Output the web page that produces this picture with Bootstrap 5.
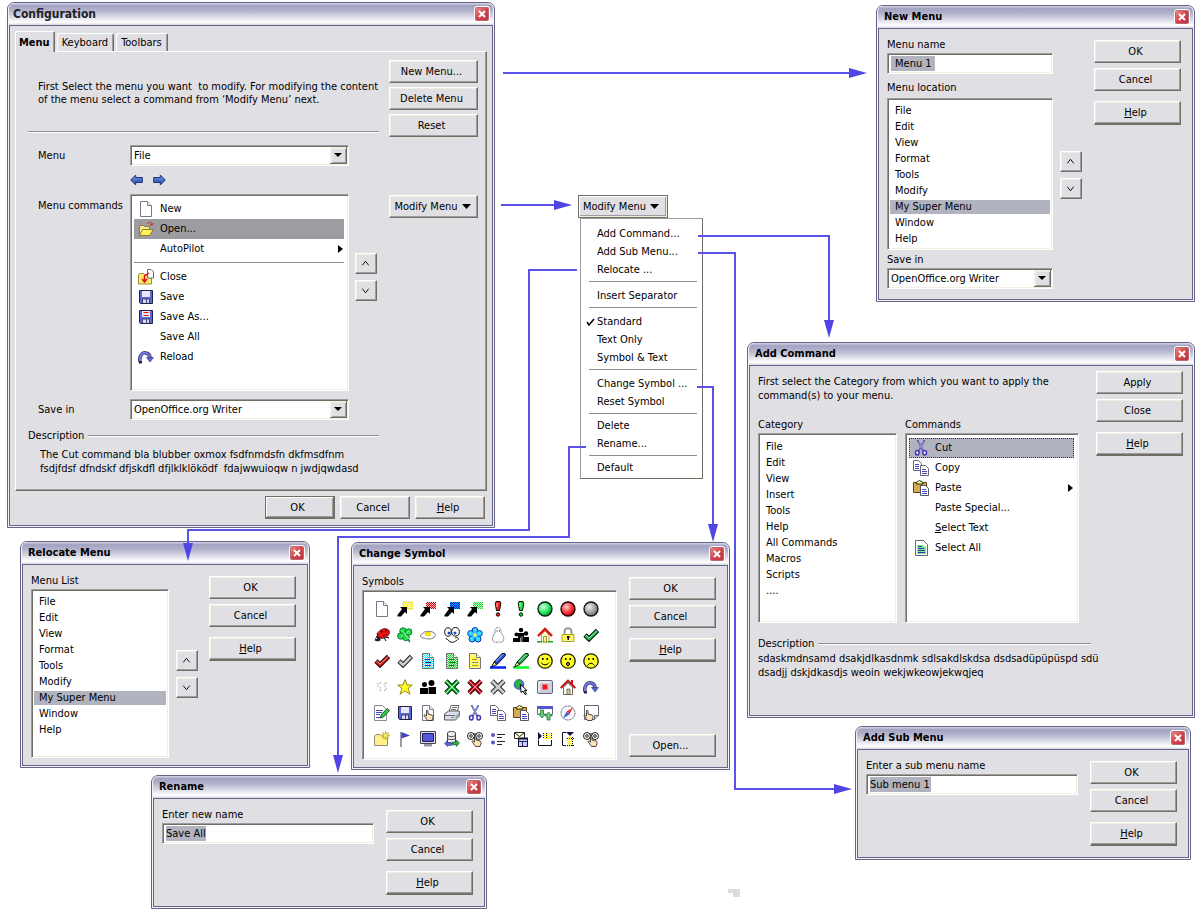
<!DOCTYPE html>
<html lang="en">
<head>
<meta charset="utf-8">
<meta name="viewport" content="width=device-width, initial-scale=1">
<title>Menu configuration dialogs</title>
<link href="https://cdn.jsdelivr.net/npm/bootstrap@5.3.0/dist/css/bootstrap.min.css" rel="stylesheet">
<style>
:root{--face:#e0dfe4;--edge:#65658a;--dark:#716f64;--mid:#9d9da1;--cream:#f1efe2;--sel:#b1b3bf}
body{font:11px/14px "DejaVu Sans Condensed","DejaVu Sans",sans-serif;color:#000;background:#fff}
svg{display:block;flex:none}
.desk{min-height:920px}
.wires{left:0;top:0;pointer-events:none;z-index:3}
/* windows */
.win{position:absolute;border:1px solid var(--edge);border-radius:7px 7px 0 0;background:#f4f4f8;padding:0 1px 1px;display:flex;flex-direction:column}
.win-title{height:22px;padding:0 3px 0 6px;border-radius:6px 6px 0 0;background:linear-gradient(#d8d8e6 0,#a2a2c2 12%,#b4b4ce 35%,#fff 88%,#d4d4e0 100%)}
.win-title h2{font-size:11px;line-height:22px;font-weight:700;margin:0}
.win-title .big{font-size:12px;color:#222}
.win-x{width:16px;height:16px;padding:0;border:1px solid #fff;border-radius:3px;background:linear-gradient(135deg,#ef9a92,#d2434a 50%,#b8323c);box-shadow:0 0 0 1px #b9656f inset}
.win-body{flex:1;border:1px solid var(--edge);background:var(--face);padding:8px 11px 6px 8px}
.w-config{left:7px;top:2px;width:488px;min-height:524px}
.w-new{left:876px;top:5px;width:319px;min-height:297px}
.w-add{left:747px;top:342px;width:448px;min-height:376px}
.w-reloc{left:20px;top:541px;width:290px;min-height:227px}
.w-symbol{left:351px;top:542px;width:379px;min-height:228px}
.w-sub{left:855px;top:726px;width:336px;min-height:134px}
.w-rename{left:151px;top:775px;width:336px;min-height:134px}
/* controls */
.wbtn{font-size:11px;line-height:13px;color:#000;height:23px;padding:0 6px 0 2px;border:1px solid;border-color:#fff var(--dark) var(--dark) #fff;border-radius:0;background:var(--face);box-shadow:inset -1px -1px var(--mid),inset 1px 1px var(--cream)}
.wbtn:hover{background:#e8e7ec;border-color:#fff var(--dark) var(--dark) #fff}
.wbtn.deep{height:24px;border-bottom-width:2px;margin-top:5px}
.wbtn.default{border:2px solid var(--dark);border-width:1px 2px 2px 1px;box-shadow:inset 1px 1px #fff,inset -1px -1px var(--mid)}
.side{width:87px;gap:5px}
.side.drop{margin-top:3px}
.spin{width:22px;gap:6px;margin-left:7px}
.spin .wbtn{height:21px;padding:0 0 0 4px}
.sunk{border:1px solid;border-color:var(--mid) #fff #fff var(--mid);border-radius:0;background-color:#fff;box-shadow:inset 1px 1px var(--dark),inset -1px -1px var(--cream)}
.lbl{display:block;line-height:16px;margin:0}
.txt{display:block;width:100%;height:21px;padding:0 3px;font-size:11px;color:#000;background:linear-gradient(var(--sel),var(--sel)) 3px 2px/var(--hl,40px) 15px no-repeat #fff;outline:0}
.txt.inset{padding-left:7px}
.combo{appearance:none;display:block;width:100%;height:21px;padding:0 20px 0 3px;font-size:11px;color:#000;outline:0;background:#fff url("data:image/svg+xml,%3Csvg xmlns='http://www.w3.org/2000/svg' width='17' height='17'%3E%3Cpath fill='%23716f64' d='M0 0h17v17H0z'/%3E%3Cpath fill='%23f1efe2' d='M0 0h16v16H0z'/%3E%3Cpath fill='%239d9da1' d='M2 2h14v14H2z'/%3E%3Cpath fill='%23e0dfe4' d='M2 2h13v13H2z'/%3E%3Cpath d='M4 6h8L8 10z'/%3E%3C/svg%3E") right 1px top 1px no-repeat}
.pick{appearance:none;display:block;width:100%;padding:4px 2px;font-size:11px;color:#000;overflow:hidden;outline:0}
.pick option{height:16px;min-height:16px;line-height:14px;padding:0 5px;border:solid transparent;border-width:1px 0;background-clip:padding-box}
.pick option:checked{background-image:linear-gradient(var(--sel),var(--sel));color:#000}
.cmds{list-style:none;margin:0;padding:4px 4px 4px 3px}
.cmds li{display:flex;align-items:center;gap:6px;height:20px;padding:0 4px}
.cmds li svg:last-child:not(:first-child){margin-left:auto;margin-right:-3px}
.cmds .on{background:var(--sel);outline:1px dotted #333;outline-offset:-1px}
.cmds .on.plain{background:#9d9ca1;outline:0}
.cmds .bar{height:8px;padding:0}
.cmds .bar hr{flex:1;margin:0 0 2px;border:0;border-top:1px solid #8c8c90;opacity:1}
.gap16{width:16px}
.rule{flex:1;height:2px;margin:0;border:0;border-top:1px solid #8f8f96;border-bottom:1px solid #fff;opacity:1}
/* configuration dialog */
.w-config .win-title{padding-left:4px}
.w-config .win-body{padding:5px 5px 6px 5px}
.tabs{height:20px;padding-left:0;gap:2px}
.tabs button{font-size:11px;line-height:13px;height:18px;border:1px solid;border-color:#fff var(--dark) transparent #fff;border-bottom:0;border-radius:3px 2px 0 0;background:var(--face);color:#000;padding:0 5px 0 4px;box-shadow:inset -1px 0 var(--mid)}
.tabs button.active{height:21px;margin-bottom:-1px;font-weight:700;padding:0 4px 0 3px;position:relative;z-index:1}
.pane{border:1px solid;border-color:#fff var(--dark) var(--dark) #fff;box-shadow:inset -1px -1px var(--mid);padding:0 8px 14px 12px}
.main{width:351px}
.main .intro{line-height:13px;margin:28px 0 25px 10px;white-space:pre-line}
.grid-row{display:grid;grid-template-columns:92px 219px auto;padding-left:10px}
.main .spin{margin-left:6px;padding-bottom:32px}
.foot{gap:5px;margin:5px 2px 0 0}
.foot .wbtn{width:70px}
.tall{height:197px}
.tools{height:28px;gap:10px}
.panebtns{width:89px;gap:4px;padding-top:8px}
.lower{margin-top:54px}
.w-new .spin{padding-top:20px}
.w-reloc .spin{padding-top:16px}
/* add command */
.w-add .win-body{padding:9px 9px 8px 8px}
.w-add .wide{width:333px}
.w-add .side{margin-top:-4px}
/* popup menu */
.popmenu{position:absolute;left:578px;top:195px;z-index:2}
.popmenu .wbtn{width:90px;border-color:var(--dark);box-shadow:inset 1px 1px #fff,inset -1px -1px var(--cream),inset -2px -2px var(--mid)}
.popmenu .dropdown-menu{position:static;margin:0 0 0 2px;min-width:0;width:123px;padding:6px 0 1px;border:1px solid;border-color:var(--mid) var(--dark) var(--dark) var(--mid);border-radius:0;background:#fff}
.popmenu .dropdown-item{display:flex;align-items:center;font-size:11px;line-height:18px;padding:0 0 0 5px;color:#000;gap:2px}
.popmenu .dropdown-item i{width:9px}
.popmenu .dropdown-divider{margin:2px 5px 5px 8px;border-top:1px solid #8c8c90;opacity:1}
.popmenu .dropdown-divider.near{margin:2px 5px 3px 8px}
.symbols{display:grid;grid-template-columns:repeat(10,1fr);grid-auto-rows:26px;place-items:center;height:170px;padding:5px 13px 0 7px}
.crumb{left:728px;top:889px}
</style>
</head>
<body>
<svg width="0" height="0" class="position-absolute" aria-hidden="true">
<defs>
<pattern id="pY" width="2" height="2" patternUnits="userSpaceOnUse"><path fill="#ffb" d="M0 0h2v2H0z"/><path fill="#fe2" d="M0 0h1v1H0zM1 1h1v1H1z"/></pattern>
<pattern id="pR" width="2" height="2" patternUnits="userSpaceOnUse"><path fill="#fbb" d="M0 0h2v2H0z"/><path fill="#c01" d="M0 0h1v1H0zM1 1h1v1H1z"/></pattern>
<pattern id="pB" width="2" height="2" patternUnits="userSpaceOnUse"><path fill="#09f" d="M0 0h2v2H0z"/><path fill="#02c" d="M0 0h1v1H0zM1 1h1v1H1z"/></pattern>
<pattern id="pG" width="2" height="2" patternUnits="userSpaceOnUse"><path fill="#cfc" d="M0 0h2v2H0z"/><path fill="#2c3" d="M0 0h1v1H0zM1 1h1v1H1z"/></pattern>
<pattern id="pC" width="2" height="2" patternUnits="userSpaceOnUse"><path fill="#fff" d="M0 0h2v2H0z"/><path fill="#0ef" d="M0 0h1v1H0zM1 1h1v1H1z"/></pattern>
<radialGradient id="bG" cx=".38" cy=".35" r=".62"><stop offset="0" stop-color="#dfe"/><stop offset=".6" stop-color="#3e6"/><stop offset="1" stop-color="#0a3"/></radialGradient>
<radialGradient id="bR" cx=".38" cy=".35" r=".62"><stop offset="0" stop-color="#fcc"/><stop offset=".6" stop-color="#f44"/><stop offset="1" stop-color="#c01"/></radialGradient>
<radialGradient id="bK" cx=".38" cy=".35" r=".62"><stop offset="0" stop-color="#eee"/><stop offset=".6" stop-color="#aaa"/><stop offset="1" stop-color="#777"/></radialGradient>
<linearGradient id="gA" x2="0" y2="1"><stop stop-color="#7da0ee"/><stop offset="1" stop-color="#1c3c9c"/></linearGradient>
</defs>
<symbol id="up" viewBox="0 0 16 16"><path d="M4.500 10 8 5.500 11.500 10" fill="none" stroke="#000"/></symbol>
<symbol id="new" viewBox="0 0 16 16"><path fill="#fff" stroke="#778" d="M2.500.5h7l4 4v11h-11z"/><path fill="#eef" stroke="#778" d="M9.500.5v4h4"/></symbol>
<symbol id="open" viewBox="0 0 16 16"><path fill="#ffe98a" stroke="#8a7c30" d="M1.500 14V4.500h4l1 1h5v3"/><path fill="#fff35c" stroke="#8a7c30" d="m1.500 14.500 3-6h11l-4 6z"/><path d="M9 3c2-3 5-2 5 1m-2-1 2 1.500L15.500 2" fill="none" stroke="#d22"/></symbol>
<symbol id="close" viewBox="0 0 16 16"><path fill="#ffee6a" stroke="#9a8a40" d="M.5 15V5.500l1-1h4l1 1h7V15z"/><path fill="#fff" stroke="#667" d="M9.500.5h3.500l2.500 2.500v6h-6z"/><path d="M11 4 6.500 7v5M4 10l2.500 3L9 10" fill="none" stroke="#d11" stroke-width="1.500"/></symbol>
<symbol id="save" viewBox="0 0 16 16"><path fill="#5c67dc" stroke="#224" d="M1.500 1.500h13v13h-12l-1-1z"/><path fill="#e8e8f8" d="M4 2h8v6H4z"/><path fill="#447" d="M4 9.500h8V14H4z"/><path fill="#d8dcf0" d="M5 10.500h3V14H5zM9 10.500h2V14H9z"/></symbol>
<symbol id="saveas" viewBox="0 0 16 16"><use href="#save"/><path stroke="#e11" d="M5.500 3.500h5M5.500 6.500h5"/></symbol>
<symbol id="reload" viewBox="0 0 16 16"><path d="M2 13C1 7 4 3 8 4c2.500.5 4 2 4 5" fill="none" stroke="#336" stroke-width="3.500"/><path d="M2 13C1 7 4 3 8 4c2.500.5 4 2 4 5" fill="none" stroke="#7078e4" stroke-width="2"/><path fill="#5a5fe0" stroke="#336" stroke-width=".6" d="M8.500 8.500h7L12 13z"/><path d="M1 12h3v2.500H1z" fill="#225"/></symbol>
<symbol id="cut" viewBox="0 0 16 16"><path d="m4.500 0 5.800 11M11.500 0 5.700 11" fill="none" stroke="#55a" stroke-width="1.700"/><path d="m5.500 1.500 4 8m1-8-4 8" stroke="#a9b4f0" stroke-width=".6"/><g fill="#fff" stroke="#43b" stroke-width="1.500"><ellipse cx="4.300" cy="12.800" rx="1.800" ry="2.200"/><ellipse cx="11.700" cy="12.800" rx="1.800" ry="2.200"/></g></symbol>
<symbol id="copy" viewBox="0 0 16 16"><g fill="#fff" stroke="#667"><path d="M.5.500h5l3 3v7h-8z"/><path d="M7.500 5.500h5l3 3v7h-8z"/></g><path stroke="#44b" d="M2 4.500h4M2 6.500h4M2 8.500h4M9 9.500h4M9 11.500h5M9 13.500h5"/></symbol>
<symbol id="paste" viewBox="0 0 16 16"><path fill="#d8ab50" stroke="#5a4310" d="M.5 2.500h13v10H.5z"/><path fill="#ff8" stroke="#221" d="M3.500 4c0-3 1-2 3-3.500 2 1.500 3.500.5 3.500 3.500z"/><path fill="#fff" stroke="#556" d="M7.500 5.500h5l3 3v7h-8z"/><path stroke="#44b" d="M9 9.500h4M9 11.500h5M9 13.500h5"/></symbol>
<symbol id="selall" viewBox="0 0 16 16"><path fill="#fff" stroke="#667" d="M2.500.5h8l4 4v11h-12z"/><path fill="#7e8" d="M4 5h6l3 2v7H4z"/><path stroke="#33b" d="M5 6.500h4M5 8.500h6M5 10.500h7M5 12.500h7"/></symbol>
<symbol id="arr" viewBox="0 0 16 16"><path fill="#000" d="M3 6h7v7L8 11l-4 4.500H.5V14L5 8z"/></symbol>
<symbol id="shY" viewBox="0 0 16 16"><path fill="url(#pY)" stroke="#bb3" stroke-width=".5" d="M6 1h10v7H6z"/><use href="#arr"/></symbol>
<symbol id="shR" viewBox="0 0 16 16"><path fill="url(#pR)" d="M6 1h10v7H6z"/><use href="#arr"/></symbol>
<symbol id="shB" viewBox="0 0 16 16"><path fill="url(#pB)" d="M6 1h10v7H6z"/><use href="#arr"/></symbol>
<symbol id="shG" viewBox="0 0 16 16"><path fill="url(#pG)" d="M6 1h10v7H6z"/><use href="#arr"/></symbol>
<symbol id="exR" viewBox="0 0 16 16"><path fill="#e22" stroke="#100" d="M6 .5h4l.8 2L9.500 9.500h-3L5.300 2.500z"/><circle cx="8" cy="13.500" r="1.700" fill="#e22" stroke="#100"/><path d="M7 2v4" stroke="#fcc"/></symbol>
<symbol id="exG" viewBox="0 0 16 16"><path fill="#2d4" stroke="#010" d="M6 .5h4l.8 2L9.500 9.500h-3L5.300 2.500z"/><circle cx="8" cy="13.500" r="1.700" fill="#2d4" stroke="#010"/><path d="M7 2v4" stroke="#cfc"/></symbol>
<symbol id="baG" viewBox="0 0 16 16"><circle cx="8" cy="8" r="7" fill="url(#bG)" stroke="#021" stroke-width="1.300"/></symbol>
<symbol id="baR" viewBox="0 0 16 16"><circle cx="8" cy="8" r="7" fill="url(#bR)" stroke="#200" stroke-width="1.300"/></symbol>
<symbol id="baK" viewBox="0 0 16 16"><circle cx="8" cy="8" r="7" fill="url(#bK)" stroke="#111" stroke-width="1.300"/></symbol>
<symbol id="bug" viewBox="0 0 16 16"><path d="m3 6 3 8m1-9 5 9m0-4 3 1" stroke="#000"/><ellipse cx="9.500" cy="6.500" rx="6.300" ry="4.500" transform="rotate(-25 9.500 6.500)" fill="#e11" stroke="#200" stroke-width=".6"/><path d="M3 8 7 12l-3 2.500-3.500-1z" fill="#222"/><path d="M7 4h1.500v1.500H7zM11 3h1.500v1.500H11zM9 8h1.500v1.500H9zM12 7h1v1h-1z" fill="#200"/><path d="M2 11h1v1H2z" fill="#fff"/></symbol>
<symbol id="clover" viewBox="0 0 16 16"><path d="M9 8c2 3 2 5 4 7" stroke="#163" stroke-width="1.500" fill="none"/><g fill="#2d4" stroke="#063" stroke-width=".8"><circle cx="6" cy="4" r="3.300"/><circle cx="11.700" cy="5" r="3.300"/><circle cx="3.800" cy="9" r="3.300"/><circle cx="9" cy="10.500" r="3.300"/></g><path d="m4 3 8 9M12 4l-8 6" stroke="#9f9"/></symbol>
<symbol id="egg" viewBox="0 0 16 16"><path fill="#fff" stroke="#777" d="M.5 9c0-2 2-2 4-4 3-1 8-1 9.500 1 2 1 2 4-1 5-4 2-7 .5-9 0-2-.2-3.500-.5-3.500-2z"/><ellipse cx="8" cy="7" rx="3" ry="2" fill="#ffe800" stroke="#cb3" stroke-width=".6"/></symbol>
<symbol id="eyes" viewBox="0 0 16 16"><g fill="#fff" stroke="#111"><ellipse cx="4" cy="5" rx="3.300" ry="4.200"/><ellipse cx="11.500" cy="4.800" rx="3.800" ry="4.300"/></g><circle cx="5" cy="6" r="1.500" fill="#14c"/><circle cx="11" cy="6" r="1.500" fill="#14c"/><path d="M2 11c0 2 2 1 2 2 2 3 6 3 9 0m-2-2c2-1 4 0 3 2" fill="none" stroke="#111"/></symbol>
<symbol id="flower" viewBox="0 0 16 16"><g fill="#3df" stroke="#03b"><circle cx="8" cy="3.500" r="3"/><circle cx="12.300" cy="6.500" r="3"/><circle cx="11" cy="12" r="3"/><circle cx="5" cy="12" r="3"/><circle cx="3.700" cy="6.500" r="3"/></g><circle cx="8" cy="8" r="3.500" fill="#3bf"/><circle cx="8" cy="8" r="1.700" fill="#ff6"/></symbol>
<symbol id="ghost" viewBox="0 0 16 16"><path d="M5 6c-1-8 7-7 6 0 3 2 4 8 1 9-2 1-3-1-4 0s-3 0-4 0c-3-2-1-7 1-9z" fill="#fff" stroke="#888" stroke-dasharray="2 .6"/><path d="M7 3v2M9.500 3v2" stroke="#888"/></symbol>
<symbol id="people3" viewBox="0 0 16 16"><circle cx="8" cy="3" r="2.200"/><circle cx="3.500" cy="7.500" r="2"/><circle cx="13" cy="6.500" r="2.200"/><path d="M5 6h6v9H5zM0 11h7v4H0zM9 10h7v5H9z"/><path stroke="#fff" stroke-width=".6" d="M7.500 10.500v5M9 9v6"/></symbol>
<symbol id="home1" viewBox="0 0 16 16"><path fill="#ffd" stroke="#aa4" d="M4.500 8 8 4l4 4v7h-7.500z"/><path fill="url(#pY)" stroke="#762" stroke-width=".7" d="M6.500 9.500h3V15h-3z"/><path fill="none" stroke="#d11" stroke-width="2.400" d="M1 9 8 2l7 7"/><path stroke="#1a2" stroke-width="1.500" d="M0 14.800h5M11 14.800h5"/></symbol>
<symbol id="lock" viewBox="0 0 16 16"><path fill="none" stroke="#999" stroke-width="2" d="M4.500 8V5c0-5 7-5 7 0v3"/><path fill="url(#pY)" stroke="#aa2" d="M2 7.500h12v7H2z"/><path d="M7 9h2.500v2H9v2H7.500v-2H7z"/></symbol>
<symbol id="ckG" viewBox="0 0 16 16"><path d="m2 8 4 4 8.500-8.500" fill="none" stroke="#010" stroke-width="4.600"/><path d="m2.500 8.500 3.500 3.500 8-8" fill="none" stroke="#2b5" stroke-width="2.600"/><path d="m3 8 3 3 8-7.500" fill="none" stroke="#cfd" stroke-width=".7"/></symbol>
<symbol id="ckR" viewBox="0 0 16 16"><path d="m2 8 4 4 8.500-8.500" fill="none" stroke="#200" stroke-width="4.600"/><path d="m2.500 8.500 3.500 3.500 8-8" fill="none" stroke="#d22" stroke-width="2.600"/><path d="m3 8 3 3 8-7.500" fill="none" stroke="#fcc" stroke-width=".7"/></symbol>
<symbol id="ckK" viewBox="0 0 16 16"><path d="m2 8 4 4 8.500-8.500" fill="none" stroke="#222" stroke-width="4.600"/><path d="m2.500 8.500 3.500 3.500 8-8" fill="none" stroke="#ccc" stroke-width="2.600"/></symbol>
<symbol id="dC" viewBox="0 0 16 16"><path fill="url(#pC)" stroke="#777" d="M2.500.5h7l4 4v11h-11z"/><path stroke="#22b" d="M5 6.500h5M5 9.500h6M5 12.500h6"/><path fill="#fff" stroke="#777" d="M9.500.5v4h4"/></symbol>
<symbol id="dG" viewBox="0 0 16 16"><path fill="url(#pG)" stroke="#777" d="M2.500.5h7l4 4v11h-11z"/><path stroke="#173" d="M5 6.500h5M5 9.500h6M5 12.500h6"/><path fill="#fff" stroke="#777" d="M9.500.5v4h4"/></symbol>
<symbol id="dY" viewBox="0 0 16 16"><path fill="url(#pY)" stroke="#777" d="M2.500.5h7l4 4v11h-11z"/><path stroke="#993" d="M5 6.500h5M5 9.500h6M5 12.500h6"/><path fill="#fff" stroke="#777" d="M9.500.5v4h4"/></symbol>
<symbol id="mkB" viewBox="0 0 16 16"><path stroke="#02f" stroke-width="2.500" d="M0 14.500h16"/><path fill="#24d" stroke="#012" d="m4 9 8-8.500h3l.5 2L7 11.500z"/><path fill="#fe7" stroke="#012" d="m4 9 3 2.500L1.500 14z"/><path stroke="#adf" d="m6 8.500 7-7"/></symbol>
<symbol id="mkG" viewBox="0 0 16 16"><path stroke="#0f2" stroke-width="2.500" d="M0 14.500h16"/><path fill="#2a4" stroke="#021" d="m4 9 8-8.500h3l.5 2L7 11.500z"/><path fill="#fe7" stroke="#021" d="m4 9 3 2.500L1.500 14z"/><path stroke="#bfb" d="m6 8.500 7-7"/></symbol>
<symbol id="face" viewBox="0 0 16 16"><circle cx="8" cy="8" r="7.200" fill="#ff2" stroke="#220" stroke-width="1.300"/><path d="M5 5h1.500v2H5zM9.500 5H11v2H9.500z"/><path d="m3.500 4 1-1" stroke="#fff"/></symbol>
<symbol id="f1" viewBox="0 0 16 16"><use href="#face"/><path d="M4 9.500c2 3 6 3 8 0" fill="none" stroke="#000"/></symbol>
<symbol id="f2" viewBox="0 0 16 16"><use href="#face"/><circle cx="8" cy="11" r="1.600" fill="#a80" stroke="#000"/></symbol>
<symbol id="f3" viewBox="0 0 16 16"><use href="#face"/><path d="M4.500 12.500c2-3 5-3 7 0" fill="none" stroke="#000"/></symbol>
<symbol id="dash" viewBox="0 0 16 16"><path d="M7 4H4L3.500 7l3 1.500L7 11l-3 1M13 4h-2.500l-.5 2.500 2.500 2-.5 3h-2" fill="none" stroke="#999" stroke-dasharray="1.500 1.500"/></symbol>
<symbol id="star" viewBox="0 0 16 16"><path d="m8 .7 2 5.300h5.300L11 9.500l2 5.800-5-3.500-5 3.500 2-5.800L.7 6H6z" fill="#ff2" stroke="#981"/></symbol>
<symbol id="people2" viewBox="0 0 16 16"><circle cx="4.500" cy="5.500" r="2.500"/><circle cx="11.500" cy="4" r="3"/><path d="M0 9h8v6H0zM8.600 8H16v7H8.600z"/></symbol>
<symbol id="xG" viewBox="0 0 16 16"><path d="m2 2 12 12M14 2 2 14" stroke="#010" stroke-width="4.600"/><path d="m2 2 12 12M14 2 2 14" stroke="#2c4" stroke-width="2.800"/><path d="m2 2 12 12M14 2 2 14" stroke="#dfd" stroke-width=".7"/></symbol>
<symbol id="xR" viewBox="0 0 16 16"><path d="m2 2 12 12M14 2 2 14" stroke="#200" stroke-width="4.600"/><path d="m2 2 12 12M14 2 2 14" stroke="#d12" stroke-width="2.800"/><path d="m2 2 12 12M14 2 2 14" stroke="#fcc" stroke-width=".7"/></symbol>
<symbol id="xK" viewBox="0 0 16 16"><path d="m2 2 12 12M14 2 2 14" stroke="#222" stroke-width="4.600"/><path d="m2 2 12 12M14 2 2 14" stroke="#ccc" stroke-width="2.800"/></symbol>
<symbol id="globe" viewBox="0 0 16 16"><circle cx="6" cy="5.500" r="5" fill="#47c" stroke="#247" stroke-width=".6"/><path d="M2 3c3-3 4-1 6-1l1 2-3 2-1 4C2 8 4 6 2 5z" fill="#2b3"/><path fill="#fff" stroke="#000" d="m7.500 5.500 6.500 6h-2.500l2 3.500-1.500.5-2-3.500-2 1.500z"/></symbol>
<symbol id="rec" viewBox="0 0 16 16"><rect x=".5" y="1.500" width="15" height="13" rx="1.500" fill="#ccd" stroke="#667"/><path fill="none" stroke="#fff" d="M2 13V3h12"/><path fill="#f11" d="M5.500 5.500h5v5h-5z"/></symbol>
<symbol id="home2" viewBox="0 0 16 16"><path fill="#fff" stroke="#666" d="M3.500 8 8 4l4.500 4v7.500h-9z"/><path fill="#c11" d="M11 1h2v4h-2z"/><path fill="#dc8" stroke="#543" stroke-width=".7" d="M7 10h3v5.500H7z"/><path fill="none" stroke="#b11" stroke-width="2" d="M.7 9 8 1.700 15.300 9"/></symbol>
<symbol id="edit" viewBox="0 0 16 16"><path fill="#fff" stroke="#889" d="M.5.500h8l4 4v11H.5z"/><path stroke="#44b" d="M2 5.500h7M2 7.500h6M2 9.500h4M2 12.500h4"/><path fill="#3c4" stroke="#031" stroke-width=".8" d="m7 10 6-6.500 2.500 2L9.500 12l-3 1z"/></symbol>
<symbol id="hand" viewBox="0 0 16 16"><path fill="#ffe2b8" stroke="#222" stroke-width=".8" d="M6.500 5.500c1-1 1.500 0 1.500 1V9l4 1c1 .5 1 1 1 2.500l-1 3H7.500L4 10.500c0-1 1-1 2.500.5z"/></symbol>
<symbol id="dochand" viewBox="0 0 16 16"><use href="#new"/><use href="#hand"/></symbol>
<symbol id="print" viewBox="0 0 16 16"><path fill="#fff" stroke="#555" stroke-width=".9" d="m5 7 2-6.500h8L13 7z"/><path fill="#dde" stroke="#444" stroke-width=".9" d="m.5 9 4-3H15l.5 1v4l-4 4H.5z"/><path fill="#9aa" d="m11.500 10.500 4-3v4l-4 3.500z"/><path d="M1 10.500h10M8 2.500h5M7 4.500h5" stroke="#667"/><path stroke="#1c3" d="M7 12.500h3"/></symbol>
<symbol id="sync" viewBox="0 0 16 16"><path fill="#fff" stroke="#668" d="M.5 1.500h15v8H.5z"/><path fill="#55c" d="M0 1h16v3H0z"/><path fill="#6c7" stroke="#163" stroke-width=".7" d="M3.500 5h3v4h2L5 13 1.500 9h2zM10 15v-4H8l3.500-4 3.800 4H13v4z"/></symbol>
<symbol id="compass" viewBox="0 0 16 16"><circle cx="8" cy="8" r="7" fill="#f8f8ff" stroke="#778" stroke-dasharray="3 .6"/><path fill="#e33" d="m13 2.500-3.500 7-3-3z"/><path fill="#46d" d="m3 13.500 3.500-7 3 3z"/></symbol>
<symbol id="notehand" viewBox="0 0 16 16"><path fill="#fff" stroke="#667" d="M1.500.5h14v10l-4 4h-10z"/><path fill="#ccd" stroke="#667" d="M11.500 14.500v-4h4"/><use href="#hand" x="-3"/></symbol>
<symbol id="newfolder" viewBox="0 0 16 16"><path fill="#ffef8a" stroke="#987" d="M.5 14.500V5l1.500-1.500h4L7.500 5h6v9.500z"/><path stroke="#cb1" stroke-width="1.300" d="M11.500 0v9M7 4.500h9M8.500 1.500l6 6m0-6-6 6"/><circle cx="11.500" cy="4.500" r="1.500" fill="#ffa"/></symbol>
<symbol id="flag" viewBox="0 0 16 16"><path stroke="#779" stroke-width="1.500" d="M4 1v15"/><path fill="#44b" d="M4.500 1 13 4.500 4.500 7.500z"/></symbol>
<symbol id="screen" viewBox="0 0 16 16"><path fill="#dde" stroke="#445" d="M.5.500h15v12H.5z"/><path fill="#55d" stroke="#225" d="M2.500 2.500h11v8h-11z"/><path fill="#99a" d="M4 13h8v2.500H4z"/></symbol>
<symbol id="db" viewBox="0 0 16 16"><path fill="#eee" stroke="#444" d="M3.500 2c0-2 8-2 8 0v9c0 2-8 2-8 0z"/><path d="M3.500 4.500c2 1.500 6 1.500 8 0m-8 3c2 1.500 6 1.500 8 0" fill="none" stroke="#444"/><path fill="#56c" stroke="#228" stroke-width=".5" d="m.5 12.500 3-3v2h4v3h-4v1z"/><path fill="#3a5" stroke="#042" stroke-width=".5" d="m15.500 12-3-3v2h-4v3h4v1.500z"/></symbol>
<symbol id="rings" viewBox="0 0 16 16"><g fill="#fff" stroke="#222"><circle cx="4" cy="5" r="3.500"/><circle cx="12" cy="5" r="3.500"/><circle cx="4" cy="5" r="1.300"/><circle cx="12" cy="5" r="1.300"/><path d="M6 3h4M6 7h4"/></g><use href="#hand" x="1"/></symbol>
<symbol id="bul" viewBox="0 0 16 16"><circle cx="3" cy="4" r="2" fill="#55c"/><circle cx="3" cy="11.500" r="2" fill="#55c"/><path stroke="#222" d="M7 3.500h8M7 6.500h5M7 10.500h8M7 13.500h5"/></symbol>
<symbol id="mail" viewBox="0 0 16 16"><path fill="#ffd" stroke="#222" d="M1.500 1.500h10v6h-10z"/><path d="m2 2 4.500 3.500L11 2" fill="none" stroke="#222"/><path fill="#ccf" stroke="#113" d="M5.500 7.500h9v8h-9z"/><path stroke="#226" d="M6 10.500h8M9.500 10v5"/><path stroke="#113" stroke-width="2" d="M5 7.500h10"/></symbol>
<symbol id="selH" viewBox="0 0 16 16"><path fill="url(#pY)" d="M6 2h9v6H6z"/><path d="M6.500 2v6M9.500 2v6M14.500 2v6" stroke="#114" stroke-dasharray="1 1"/><path fill="#114" d="m1 1 4 4-4 4z"/><path fill="none" stroke="#112" d="M1.500 9v5.500h13V9"/></symbol>
<symbol id="selV" viewBox="0 0 16 16"><path fill="url(#pY)" d="M7 6h6v9H7z"/><path d="M7 7.500h7M7 14.500h7M12.500 6v9" stroke="#114" stroke-dasharray="1 1"/><path fill="#114" d="M6 1h8l-4 4z"/><path fill="none" stroke="#112" d="M6 1.500H2.500v13H6"/></symbol>
<symbol id="left" viewBox="0 0 13 12"><path fill="url(#gA)" stroke="#1c3580" d="m.700 6 5-5v2.500h6.600v5H5.700V11z"/></symbol>
<symbol id="xx" viewBox="0 0 14 14"><path d="m4 4 6 6m0-6-6 6" stroke="#fff" stroke-width="2"/></symbol>
</svg>

<main class="desk position-relative">

<section class="win w-config" aria-label="Configuration">
 <header class="win-title d-flex align-items-center justify-content-between"><h2 class="big">Configuration</h2><button class="win-x" aria-label="Close"><svg width="14" height="14"><use href="#xx"/></svg></button></header>
 <div class="win-body">
  <div class="tabs d-flex align-items-end" role="tablist"><button class="active" role="tab">Menu</button><button role="tab">Keyboard</button><button role="tab">Toolbars</button></div>
  <div class="pane d-flex justify-content-between">
   <div class="main">
    <p class="intro">First Select the menu you want&nbsp; to modify. For modifying the content
of the menu select a command from ‘Modify Menu’ next.</p>
    <hr class="rule">
    <div class="grid-row align-items-center mt-2 pt-1"><label for="cMenu">Menu</label><select id="cMenu" class="combo sunk"><option>File</option></select></div>
    <div class="grid-row"><span></span><div class="tools d-flex align-items-center"><svg width="13" height="12"><use href="#left"/></svg><svg width="13" height="12"><use href="#left" transform="matrix(-1 0 0 1 13 0)"/></svg></div></div>
    <div class="grid-row">
     <span class="lbl pt-1">Menu commands</span>
     <ul class="cmds sunk tall">
      <li><svg width="16" height="16"><use href="#new"/></svg>New</li>
      <li class="on plain"><svg width="16" height="16"><use href="#open"/></svg>Open...</li>
      <li><span class="gap16"></span>AutoPilot<svg width="5" height="8"><path d="M0 0v8l5-4z"/></svg></li>
      <li class="bar"><hr></li>
      <li><svg width="16" height="16"><use href="#close"/></svg>Close</li>
      <li><svg width="16" height="16"><use href="#save"/></svg>Save</li>
      <li><svg width="16" height="16"><use href="#saveas"/></svg>Save As...</li>
      <li><span class="gap16"></span>Save All</li>
      <li><svg width="16" height="16"><use href="#reload"/></svg>Reload</li>
     </ul>
     <div class="spin d-flex flex-column justify-content-center"><button class="btn wbtn" aria-label="Move up"><svg width="11" height="11" viewBox="2 2 12 12"><use href="#up" width="16" height="16"/></svg></button><button class="btn wbtn" aria-label="Move down"><svg width="11" height="11" viewBox="2 2 12 12"><use href="#up" width="16" height="16" transform="matrix(1 0 0 -1 0 16)"/></svg></button></div>
    </div>
    <div class="grid-row align-items-center pt-2"><label for="cSave">Save in</label><select id="cSave" class="combo sunk"><option>OpenOffice.org Writer</option></select></div>
    <div class="d-flex align-items-center gap-1 pt-2"><span class="lbl">Description</span><hr class="rule"></div>
    <p class="m-0 ps-2 pt-1 ms-1 text-nowrap">The Cut command bla blubber oxmox fsdfnmdsfn dkfmsdfnm<br>fsdjfdsf dfndskf dfjskdfl dfjlklklöködf&nbsp; fdajwwuioqw n jwdjqwdasd</p>
   </div>
   <div class="panebtns d-flex flex-column"><button class="btn wbtn">New Menu...</button><button class="btn wbtn">Delete Menu</button><button class="btn wbtn">Reset</button><button class="btn wbtn lower d-flex align-items-center justify-content-center gap-1 text-nowrap ps-1">Modify Menu<svg width="9" height="5"><path d="M0 0h9L4.500 5z"/></svg></button></div>
  </div>
  <div class="foot d-flex justify-content-end"><button class="btn wbtn default">OK</button><button class="btn wbtn">Cancel</button><button class="btn wbtn"><u>H</u>elp</button></div>
 </div>
</section>

<section class="win w-new" aria-label="New Menu">
 <header class="win-title d-flex align-items-center justify-content-between"><h2>New Menu</h2><button class="win-x" aria-label="Close"><svg width="14" height="14"><use href="#xx"/></svg></button></header>
 <div class="win-body d-flex justify-content-between">
  <div class="d-flex">
   <div style="width:166px">
    <label class="lbl" for="nName">Menu name</label><input id="nName" class="txt inset sunk" value="Menu 1" style="--hl:44px">
    <label class="lbl" for="nLoc" style="padding:6px 0 2px">Menu location</label>
    <select id="nLoc" class="pick sunk" size="9" style="height:152px"><option>File</option><option>Edit</option><option>View</option><option>Format</option><option>Tools</option><option>Modify</option><option selected>My Super Menu</option><option>Window</option><option>Help</option></select>
    <label class="lbl" for="nSave" style="padding-top:2px">Save in</label><select id="nSave" class="combo sunk"><option>OpenOffice.org Writer</option></select>
   </div>
   <div class="spin d-flex flex-column justify-content-center"><button class="btn wbtn" aria-label="Move up"><svg width="11" height="11" viewBox="2 2 12 12"><use href="#up" width="16" height="16"/></svg></button><button class="btn wbtn" aria-label="Move down"><svg width="11" height="11" viewBox="2 2 12 12"><use href="#up" width="16" height="16" transform="matrix(1 0 0 -1 0 16)"/></svg></button></div>
  </div>
  <div class="side drop d-flex flex-column"><button class="btn wbtn">OK</button><button class="btn wbtn">Cancel</button><button class="btn wbtn deep"><u>H</u>elp</button></div>
 </div>
</section>

<div class="popmenu">
 <button class="btn wbtn d-flex align-items-center justify-content-center gap-1 text-nowrap">Modify Menu<svg width="9" height="5"><path d="M0 0h9L4.500 5z"/></svg></button>
 <div class="dropdown-menu show">
  <button class="dropdown-item"><i></i>Add Command...</button><button class="dropdown-item"><i></i>Add Sub Menu...</button><button class="dropdown-item"><i></i>Relocate ...</button>
  <hr class="dropdown-divider">
  <button class="dropdown-item"><i></i>Insert Separator</button>
  <hr class="dropdown-divider">
  <button class="dropdown-item"><svg width="9" height="8"><path d="m1 4 2 3 5-6" fill="none" stroke="#000" stroke-width="1.500"/></svg>Standard</button><button class="dropdown-item"><i></i>Text Only</button><button class="dropdown-item"><i></i>Symbol &amp; Text</button>
  <hr class="dropdown-divider">
  <button class="dropdown-item"><i></i>Change Symbol ...</button><button class="dropdown-item"><i></i>Reset Symbol</button>
  <hr class="dropdown-divider near">
  <button class="dropdown-item"><i></i>Delete</button><button class="dropdown-item"><i></i>Rename...</button>
  <hr class="dropdown-divider near">
  <button class="dropdown-item"><i></i>Default</button>
 </div>
</div>

<section class="win w-add" aria-label="Add Command">
 <header class="win-title d-flex align-items-center justify-content-between"><h2>Add Command</h2><button class="win-x" aria-label="Close"><svg width="14" height="14"><use href="#xx"/></svg></button></header>
 <div class="win-body d-flex justify-content-between">
  <div class="wide">
   <p class="m-0">First select the Category from which you want to apply the<br>command(s) to your menu.</p>
   <div class="d-flex gap-2" style="margin-top:14px">
    <div style="width:139px"><label class="lbl" for="aCat">Category</label><select id="aCat" class="pick sunk" size="10" style="height:190px;padding-top:5px"><option>File</option><option>Edit</option><option>View</option><option>Insert</option><option>Tools</option><option>Help</option><option>All Commands</option><option>Macros</option><option>Scripts</option><option>....</option></select></div>
    <div style="width:174px"><span class="lbl">Commands</span>
     <ul class="cmds sunk" style="height:190px">
      <li class="on"><svg width="16" height="16"><use href="#cut"/></svg>Cut</li>
      <li><svg width="16" height="16"><use href="#copy"/></svg>Copy</li>
      <li><svg width="16" height="16"><use href="#paste"/></svg>Paste<svg width="5" height="8"><path d="M0 0v8l5-4z"/></svg></li>
      <li><span class="gap16"></span>Paste Special...</li>
      <li><span class="gap16"></span><span><u>S</u>elect Text</span></li>
      <li><svg width="16" height="16"><use href="#selall"/></svg>Select All</li>
     </ul></div>
   </div>
   <div class="d-flex align-items-center gap-1" style="margin-top:13px"><span class="lbl">Description</span><hr class="rule"></div>
   <p class="m-0 text-nowrap">sdaskmdnsamd dsakjdlkasdnmk sdlsakdlskdsa dsdsadüpüpüspd sdü<br>dsadjj dskjdkasdjs weoin wekjwkeowjekwqjeq</p>
  </div>
  <div class="side d-flex flex-column"><button class="btn wbtn">Apply</button><button class="btn wbtn">Close</button><button class="btn wbtn deep"><u>H</u>elp</button></div>
 </div>
</section>

<section class="win w-reloc" aria-label="Relocate Menu">
 <header class="win-title d-flex align-items-center justify-content-between"><h2>Relocate Menu</h2><button class="win-x" aria-label="Close"><svg width="14" height="14"><use href="#xx"/></svg></button></header>
 <div class="win-body d-flex justify-content-between">
  <div class="d-flex">
   <div style="width:138px"><label class="lbl" for="rList">Menu List</label>
    <select id="rList" class="pick sunk" size="10" style="height:169px"><option>File</option><option>Edit</option><option>View</option><option>Format</option><option>Tools</option><option>Modify</option><option selected>My Super Menu</option><option>Window</option><option>Help</option></select></div>
   <div class="spin d-flex flex-column justify-content-center"><button class="btn wbtn" aria-label="Move up"><svg width="11" height="11" viewBox="2 2 12 12"><use href="#up" width="16" height="16"/></svg></button><button class="btn wbtn" aria-label="Move down"><svg width="11" height="11" viewBox="2 2 12 12"><use href="#up" width="16" height="16" transform="matrix(1 0 0 -1 0 16)"/></svg></button></div>
  </div>
  <div class="side drop d-flex flex-column"><button class="btn wbtn">OK</button><button class="btn wbtn">Cancel</button><button class="btn wbtn deep"><u>H</u>elp</button></div>
 </div>
</section>

<section class="win w-symbol" aria-label="Change Symbol">
 <header class="win-title d-flex align-items-center justify-content-between"><h2>Change Symbol</h2><button class="win-x" aria-label="Close"><svg width="14" height="14"><use href="#xx"/></svg></button></header>
 <div class="win-body d-flex justify-content-between">
  <div style="width:255px"><span class="lbl">Symbols</span>
   <div class="symbols sunk">
    <svg width="16" height="16"><use href="#new"/></svg><svg width="16" height="16"><use href="#shY"/></svg><svg width="16" height="16"><use href="#shR"/></svg><svg width="16" height="16"><use href="#shB"/></svg><svg width="16" height="16"><use href="#shG"/></svg><svg width="16" height="16"><use href="#exR"/></svg><svg width="16" height="16"><use href="#exG"/></svg><svg width="16" height="16"><use href="#baG"/></svg><svg width="16" height="16"><use href="#baR"/></svg><svg width="16" height="16"><use href="#baK"/></svg>
    <svg width="16" height="16"><use href="#bug"/></svg><svg width="16" height="16"><use href="#clover"/></svg><svg width="16" height="16"><use href="#egg"/></svg><svg width="16" height="16"><use href="#eyes"/></svg><svg width="16" height="16"><use href="#flower"/></svg><svg width="16" height="16"><use href="#ghost"/></svg><svg width="16" height="16"><use href="#people3"/></svg><svg width="16" height="16"><use href="#home1"/></svg><svg width="16" height="16"><use href="#lock"/></svg><svg width="16" height="16"><use href="#ckG"/></svg>
    <svg width="16" height="16"><use href="#ckR"/></svg><svg width="16" height="16"><use href="#ckK"/></svg><svg width="16" height="16"><use href="#dC"/></svg><svg width="16" height="16"><use href="#dG"/></svg><svg width="16" height="16"><use href="#dY"/></svg><svg width="16" height="16"><use href="#mkB"/></svg><svg width="16" height="16"><use href="#mkG"/></svg><svg width="16" height="16"><use href="#f1"/></svg><svg width="16" height="16"><use href="#f2"/></svg><svg width="16" height="16"><use href="#f3"/></svg>
    <svg width="16" height="16"><use href="#dash"/></svg><svg width="16" height="16"><use href="#star"/></svg><svg width="16" height="16"><use href="#people2"/></svg><svg width="16" height="16"><use href="#xG"/></svg><svg width="16" height="16"><use href="#xR"/></svg><svg width="16" height="16"><use href="#xK"/></svg><svg width="16" height="16"><use href="#globe"/></svg><svg width="16" height="16"><use href="#rec"/></svg><svg width="16" height="16"><use href="#home2"/></svg><svg width="16" height="16"><use href="#reload"/></svg>
    <svg width="16" height="16"><use href="#edit"/></svg><svg width="16" height="16"><use href="#save"/></svg><svg width="16" height="16"><use href="#dochand"/></svg><svg width="16" height="16"><use href="#print"/></svg><svg width="16" height="16"><use href="#cut"/></svg><svg width="16" height="16"><use href="#copy"/></svg><svg width="16" height="16"><use href="#paste"/></svg><svg width="16" height="16"><use href="#sync"/></svg><svg width="16" height="16"><use href="#compass"/></svg><svg width="16" height="16"><use href="#notehand"/></svg>
    <svg width="16" height="16"><use href="#newfolder"/></svg><svg width="16" height="16"><use href="#flag"/></svg><svg width="16" height="16"><use href="#screen"/></svg><svg width="16" height="16"><use href="#db"/></svg><svg width="16" height="16"><use href="#rings"/></svg><svg width="16" height="16"><use href="#bul"/></svg><svg width="16" height="16"><use href="#mail"/></svg><svg width="16" height="16"><use href="#selH"/></svg><svg width="16" height="16"><use href="#selV"/></svg><svg width="16" height="16"><use href="#rings"/></svg>
   </div></div>
  <div class="side drop d-flex flex-column"><button class="btn wbtn">OK</button><button class="btn wbtn">Cancel</button><button class="btn wbtn deep"><u>H</u>elp</button><button class="btn wbtn mt-auto mb-1">Open...</button></div>
 </div>
</section>

<section class="win w-sub" aria-label="Add Sub Menu">
 <header class="win-title d-flex align-items-center justify-content-between"><h2>Add Sub Menu</h2><button class="win-x" aria-label="Close"><svg width="14" height="14"><use href="#xx"/></svg></button></header>
 <div class="win-body d-flex justify-content-between">
  <div style="width:212px"><label class="lbl" for="sName">Enter a sub menu name</label><input id="sName" class="txt sunk" value="Sub menu 1" style="--hl:61px"></div>
  <div class="side drop d-flex flex-column"><button class="btn wbtn">OK</button><button class="btn wbtn">Cancel</button><button class="btn wbtn deep"><u>H</u>elp</button></div>
 </div>
</section>

<section class="win w-rename" aria-label="Rename">
 <header class="win-title d-flex align-items-center justify-content-between"><h2>Rename</h2><button class="win-x" aria-label="Close"><svg width="14" height="14"><use href="#xx"/></svg></button></header>
 <div class="win-body d-flex justify-content-between">
  <div style="width:212px"><label class="lbl" for="reName">Enter new name</label><input id="reName" class="txt sunk" value="Save All"></div>
  <div class="side drop d-flex flex-column"><button class="btn wbtn">OK</button><button class="btn wbtn">Cancel</button><button class="btn wbtn deep"><u>H</u>elp</button></div>
 </div>
</section>

<!-- connectors from each command to the dialog it opens -->
<svg class="wires position-absolute" width="1200" height="920" aria-hidden="true">
 <g fill="none" stroke="#5a50ea" stroke-width="2">
  <path d="M503 73h350M501 205h57M698 236h131v88M698 253h37v536h102M577 270h-48v260H188v18M586 447h-17v90H338v222M697 387h16v140"/>
 </g>
 <g fill="#4f46e5"><path d="m867 73-18-5v10zM572 205l-18-5v10zM829 338l-5-18h10zM852 789l-18-5v10zM188 561l-5-18h10zM338 773l-5-18h10zM713 542l-5-18h10z"/></g>
</svg>
<svg class="crumb position-absolute" width="12" height="8" aria-hidden="true"><path fill="#dcdcdc" d="M0 0h12v8H5V4H0z"/></svg>
</main>
<script src="https://cdn.jsdelivr.net/npm/bootstrap@5.3.0/dist/js/bootstrap.bundle.min.js"></script>
</body>
</html>
